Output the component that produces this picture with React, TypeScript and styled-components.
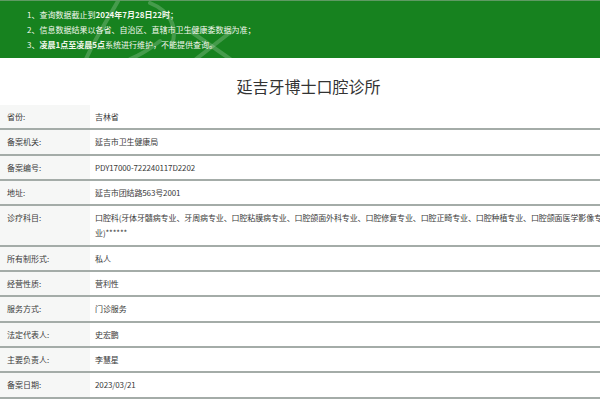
import React from "react";
import styled, { createGlobalStyle } from "styled-components";

const Global = createGlobalStyle`
  html, body { margin: 0; padding: 0; background: #fff; overflow: hidden; }
  body { font-family: "Noto Sans CJK SC", "Noto Sans", sans-serif; }
`;

const Page = styled.div`
  width: 617px;
  background: #fff;
`;

const Banner = styled.div`
  position: relative;
  width: 600px;
  height: 58px;
  box-sizing: border-box;
  background: #17821f;
  border-top: 1px solid #5f9a63;
  padding: 6px 0 0 27px;
  overflow: hidden;
  color: #f4f8ee;
  font-size: 8px;
  line-height: 15px;
`;

const Deco = styled.svg`
  position: absolute;
  left: 0;
  top: 0;
  pointer-events: none;
`;

const Notice = styled.div`
  position: relative;
  white-space: nowrap;
`;

const B = styled.b`
  font-weight: 700;
`;

const Title = styled.h1`
  margin: 0;
  padding: 18px 0 9px;
  text-align: center;
  font-size: 16px;
  line-height: 20px;
  font-weight: 400;
  color: #333;
`;

const Table = styled.div`
  display: grid;
  grid-template-columns: 90px 1fr;
  font-size: 8px;
  color: #3a3a3a;
`;

const Label = styled.div`
  background: #f6f7f6;
  border-bottom: 2px solid #a4aca8;
  padding: 4px 0 4px 7px;
  line-height: 15.3px;
`;

const Value = styled.div`
  border-bottom: 2px solid #a4aca8;
  padding: 4px 12px 4px 5px;
  line-height: 15.3px;
  letter-spacing: -0.12px;
`;

const Keep = styled.span`
  white-space: nowrap;
`;

const rows: [string, React.ReactNode][] = [
  ["省份:", "吉林省"],
  ["备案机关:", "延吉市卫生健康局"],
  ["备案编号:", "PDY17000-722240117D2202"],
  ["地址:", "延吉市团结路563号2001"],
  [
    "诊疗科目:",
    <>
      口腔科(牙体牙髓病专业、牙周病专业、口腔粘膜病专业、口腔颌面外科专业、口腔修复专业、口腔正畸专业、口腔种植专业、口腔颌面医学影像专
      <Keep>业)******</Keep>
    </>,
  ],
  ["所有制形式:", "私人"],
  ["经营性质:", "营利性"],
  ["服务方式:", "门诊服务"],
  ["法定代表人:", "史宏鹏"],
  ["主要负责人:", "李慧星"],
  ["备案日期:", "2023/03/21"],
];

export default function App() {
  return (
    <Page>
      <Global />
      <Banner>
        <Deco width="600" height="58" viewBox="0 0 600 58">
          <g fill="none" stroke="#ffffff" strokeOpacity="0.2" strokeWidth="4" strokeLinecap="round">
            <path d="M118 0 C 108 18, 96 36, 86 58" />
            <path d="M150 2 C 170 10, 178 26, 172 44" />
            <path d="M190 30 L 230 58" />
            <path d="M232 30 L 196 58" />
            <path d="M160 40 C 150 48, 140 54, 130 58" />
          </g>
        </Deco>
        <Notice>1、查询数据截止到<B>2024年7月28日22时</B>；</Notice>
        <Notice>2、信息数据结果以各省、自治区、直辖市卫生健康委数据为准；</Notice>
        <Notice>3、<B>凌晨1点至凌晨5点</B>系统进行维护，不能提供查询。</Notice>
      </Banner>
      <Title>延吉牙博士口腔诊所</Title>
      <Table>
        {rows.map(([l, v]) => (
          <React.Fragment key={l}>
            <Label>{l}</Label>
            <Value>{v}</Value>
          </React.Fragment>
        ))}
      </Table>
    </Page>
  );
}
